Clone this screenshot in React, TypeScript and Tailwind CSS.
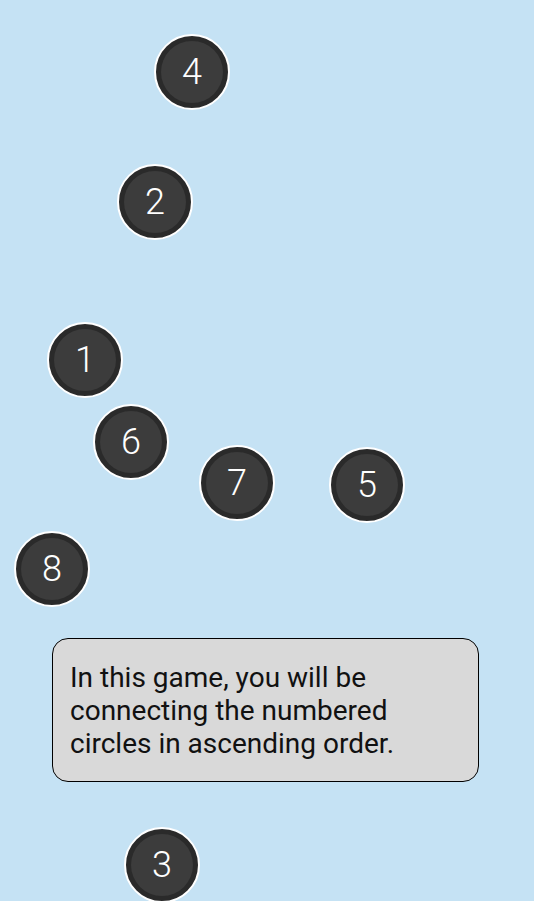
const nodes = [
  { n: 4, x: 192, y: 72 },
  { n: 2, x: 155, y: 202 },
  { n: 1, x: 85, y: 360 },
  { n: 6, x: 131, y: 442 },
  { n: 7, x: 237, y: 483 },
  { n: 5, x: 367, y: 485 },
  { n: 8, x: 52, y: 569 },
  { n: 3, x: 162, y: 865 },
]

function Node({ n, x, y }: { n: number; x: number; y: number }) {
  return (
    <div
      className="absolute flex h-[76px] w-[76px] items-center justify-center rounded-full border-2 border-white bg-[#2a2a2a]"
      style={{ left: x - 38, top: y - 38 }}
    >
      <div className="flex h-[62px] w-[62px] items-center justify-center rounded-full bg-[#3c3c3c] text-[36px] font-light text-white [font-family:Roboto,sans-serif]">
        {n}
      </div>
    </div>
  )
}

export default function App() {
  return (
    <div className="relative h-[901px] w-full overflow-hidden bg-[#c5e2f4]">
      {nodes.map((node) => (
        <Node key={node.n} {...node} />
      ))}
      <div className="pl-[52px] pr-[55px] pt-[638px]">
        <div className="h-[144px] rounded-2xl border border-black bg-[#d9d9d9] px-[17px] pt-[22px] text-[28px] leading-[33px] text-[#111] [font-family:Roboto,sans-serif]">
          In this game, you will be
          <br />
          connecting the numbered
          <br />
          circles in ascending order.
        </div>
      </div>
    </div>
  )
}
